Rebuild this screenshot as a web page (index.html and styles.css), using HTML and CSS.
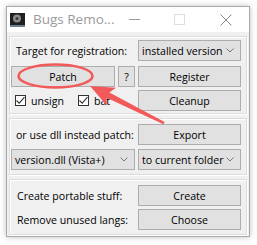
FILE: index.html
```html
<!DOCTYPE html>
<html>
<head>
    <title>Bugs Remover</title>
    <link rel="stylesheet" href="styles.css">
</head>
<body>
    <div class="window">
        <div class="titlebar">
            <svg class="app-icon" width="15" height="14" viewBox="0 0 15 14">
                <rect x="0" y="0" width="15" height="12" fill="#1f1f1f"/>
                <circle cx="7" cy="5.5" r="4" fill="#8a8a8a"/>
                <circle cx="7" cy="5.5" r="1.5" fill="#3a3a3a"/>
                <rect x="0" y="12" width="15" height="2" fill="#6d7f8c"/>
            </svg>
            <span class="title">Bugs Remo...</span>
            <div class="caption">
                <svg width="46" height="25" viewBox="0 0 46 25"><line x1="18" y1="12.5" x2="29" y2="12.5" stroke="#9a9a9a"/></svg>
                <svg width="46" height="25" viewBox="0 0 46 25"><rect x="17.5" y="7.5" width="10" height="10" fill="none" stroke="#dedede"/></svg>
                <svg width="46" height="25" viewBox="0 0 46 25"><path d="M17.5 7.5 L28.5 18.5 M28.5 7.5 L17.5 18.5" stroke="#8a8a8a" stroke-width="1"/></svg>
            </div>
        </div>

        <div class="client">
            <div class="group g1">
                <div class="row r-top">
                    <span class="label">Target for registration:</span>
                    <div class="combo"><span class="ctext">installed version</span><svg class="chev" width="8" height="5" viewBox="0 0 8 5"><path d="M0.5 0.5 L4 4 L7.5 0.5" fill="none" stroke="#777"/></svg></div>
                </div>
                <div class="row r-mid">
                    <div class="split">
                        <button class="btn patch">Patch</button>
                        <button class="btn q">?</button>
                    </div>
                    <button class="btn">Register</button>
                </div>
                <div class="row r-low">
                    <div class="checks">
                        <span class="check"><span class="box"><svg width="9" height="9" viewBox="0 0 9 9"><path d="M0.5 4.5 L3.2 7.2 L8.5 1.2" fill="none" stroke="#333" stroke-width="1.1"/></svg></span>unsign</span>
                        <span class="check"><span class="box"><svg width="9" height="9" viewBox="0 0 9 9"><path d="M0.5 4.5 L3.2 7.2 L8.5 1.2" fill="none" stroke="#333" stroke-width="1.1"/></svg></span>bat</span>
                    </div>
                    <button class="btn">Cleanup</button>
                </div>
            </div>

            <div class="group g2">
                <div class="row">
                    <span class="label">or use dll instead patch:</span>
                    <button class="btn">Export</button>
                </div>
                <div class="row">
                    <div class="combo"><span class="ctext">version.dll (Vista+)</span><svg class="chev" width="8" height="5" viewBox="0 0 8 5"><path d="M0.5 0.5 L4 4 L7.5 0.5" fill="none" stroke="#777"/></svg></div>
                    <div class="combo"><span class="ctext">to current folder</span><svg class="chev" width="8" height="5" viewBox="0 0 8 5"><path d="M0.5 0.5 L4 4 L7.5 0.5" fill="none" stroke="#777"/></svg></div>
                </div>
            </div>

            <div class="group g3">
                <div class="row">
                    <span class="label">Create portable stuff:</span>
                    <button class="btn">Create</button>
                </div>
                <div class="row">
                    <span class="label">Remove unused langs:</span>
                    <button class="btn">Choose</button>
                </div>
            </div>
        </div>
    </div>

    <!-- red annotation drawn on top of the screenshot -->
    <svg class="annot" width="257" height="245" viewBox="0 0 257 245">
        <ellipse cx="55.5" cy="76" rx="37" ry="11.5" fill="none" stroke="#f25a5a" stroke-width="2.6"/>
        <polygon points="90,86 116,87.8 109.4,92.4 164.6,122 163.4,124.2 106.6,97.8 107,105.8" fill="#f25a5a"/>
    </svg>
</body>
</html>
```

FILE: styles.css
```css
body {
    margin: 0;
    padding: 6px 7px 8px 6px;
    background: #ffffff;
    font-family: 'Open Sans', 'Noto Sans', sans-serif;
    font-size: 10.6px;
    color: #000;
}

.window {
    width: 242px;
    height: 229px;
    border: 1px solid #a9a9a9;
    box-shadow: 0 0 6px rgba(0,0,0,0.25);
    background: #f0f0f0;
    display: flex;
    flex-direction: column;
}

.titlebar {
    height: 25px;
    background: #fff;
    display: flex;
    align-items: center;
}

.app-icon {
    flex: none;
    margin-left: 3px;
    margin-right: 8px;
}

.title {
    font-size: 13.5px;
    color: #9a9a9a;
    flex: 1;
    min-width: 0;
    white-space: nowrap;
    margin-top: -1px;
}

.caption {
    display: flex;
    flex: none;
}

.caption svg {
    display: block;
}

.client {
    flex: 1;
    padding: 4px 2px 3px 2px;
    display: flex;
    flex-direction: column;
    gap: 4px;
}

.group {
    border: 1px solid #dcdcdc;
    box-shadow: inset 1px 1px 0 #fff, 1px 1px 0 #fff;
    padding: 3px 5px 2px 1px;
    display: flex;
    flex-direction: column;
}

.row {
    display: grid;
    grid-template-columns: minmax(0, 1fr) 103px;
    column-gap: 3px;
    align-items: center;
    height: 21px;
}

.g1 .r-mid {
    margin-top: 5px;
}

.g1 .r-low {
    margin-top: 3px;
}

.g2 {
    padding-top: 5px;
    padding-bottom: 4px;
    gap: 4px;
}

.g3 {
    padding-top: 5px;
    padding-bottom: 4px;
    gap: 3px;
}

.label {
    padding-left: 5px;
    white-space: nowrap;
}

.g3 .label {
    padding-left: 6px;
}

.btn, .combo {
    height: 21px;
    box-sizing: border-box;
    border: 1px solid #adadad;
    background: #e1e1e1;
    font-family: inherit;
    font-size: 10.6px;
    color: #000;
    padding: 0;
    margin: 0;
}

.combo {
    display: flex;
    align-items: center;
    padding: 0 6px 0 3px;
    white-space: nowrap;
    overflow: hidden;
}

.ctext {
    flex: 1;
    min-width: 0;
}

.chev {
    display: block;
    flex: none;
    margin-left: 2px;
}

.split {
    display: flex;
    gap: 3px;
}

.patch {
    width: 104px;
}

.q {
    width: 17px;
}

.checks {
    display: flex;
    align-items: center;
    padding-left: 4px;
}

.check {
    display: flex;
    align-items: center;
    gap: 5px;
    width: 63px;
    flex: none;
}

.check:last-child {
    width: auto;
}

.box {
    width: 11px;
    height: 11px;
    box-sizing: border-box;
    border: 1px solid #333;
    background: #fff;
    display: flex;
    align-items: center;
    justify-content: center;
}

.box svg {
    display: block;
}

.annot {
    position: absolute;
    left: 0;
    top: 0;
    pointer-events: none;
}
```
